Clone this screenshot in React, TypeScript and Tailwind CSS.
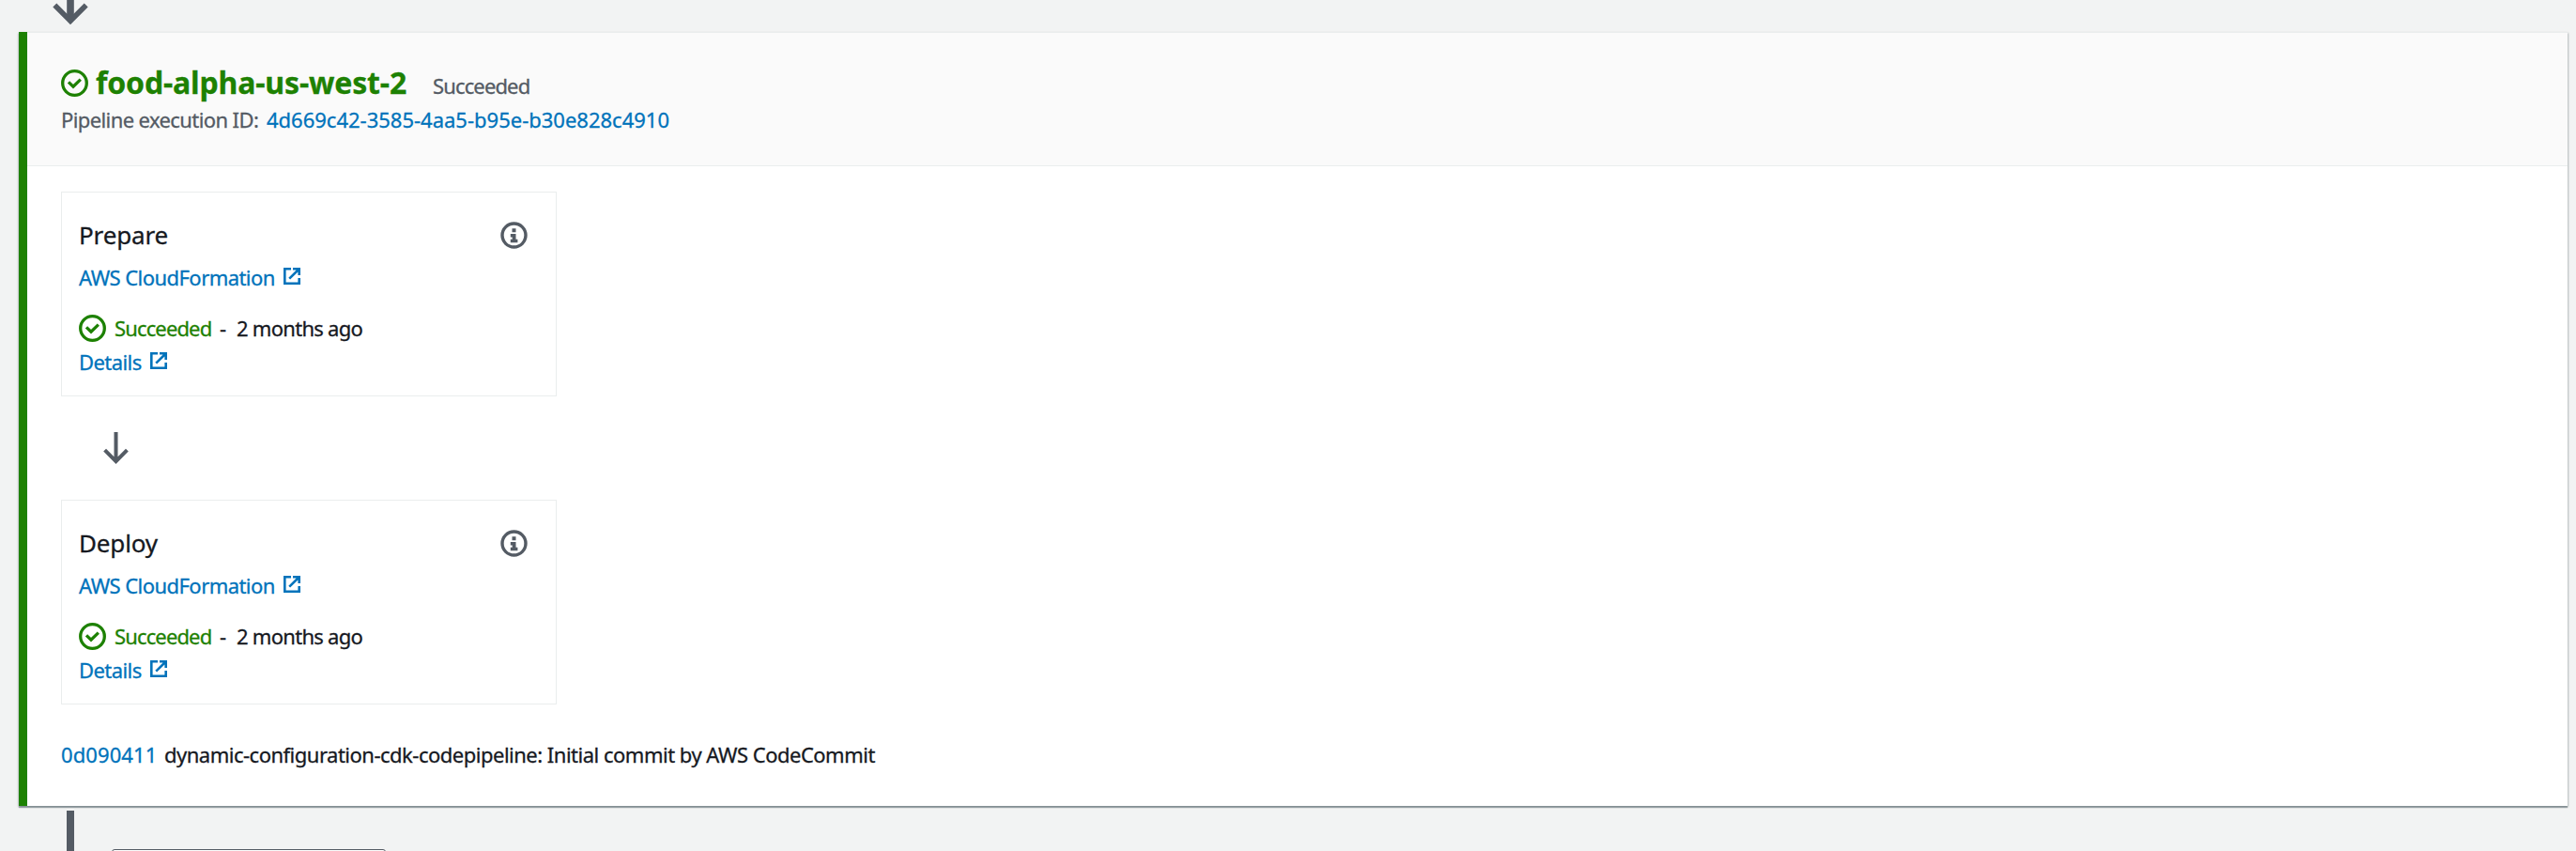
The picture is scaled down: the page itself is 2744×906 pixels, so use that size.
import React from "react";

function CheckIcon() {
  return (
    <svg width="29" height="29" viewBox="0 0 29 29" fill="none" stroke="#1d8102" strokeWidth="3.3" className="block shrink-0">
      <circle cx="14.5" cy="14.5" r="12.8" />
      <path d="M8 13.4l5 4.8 7.8-7.6" />
    </svg>
  );
}

function InfoIcon() {
  return (
    <svg width="29" height="29" viewBox="0 0 29 29" fill="none" className="block shrink-0">
      <circle cx="14.5" cy="14.5" r="12.5" stroke="#545b64" strokeWidth="3.4" />
      <path fill="#545b64" d="M12.5 7.2h4v4h-4zM10.8 13h5.7v5.7h1.9v3.6h-7.6v-3.6h1.9v-2.2h-1.9z" />
    </svg>
  );
}

function ExternalIcon() {
  return (
    <svg width="18" height="18" viewBox="0 0 18 18" fill="none" stroke="#0073bb" strokeWidth="2.6" className="block shrink-0">
      <path d="M8 1.3H1.3v15.4h15.4V11" />
      <path d="M10 1.3h6.7V8M16.5 1.5L6.2 11.6" />
    </svg>
  );
}

function ActionCard({ name }: { name: string }) {
  return (
    <div className="h-[218px] w-[528px] border border-[#eaeded] pr-[30px] pl-[18px]">
      <div className="flex h-[65px] items-end justify-between">
        <div className="h-[35px] text-[26px] leading-[30px] tracking-[-0.15px]">{name}</div>
        <div className="pb-[5px]"><InfoIcon /></div>
      </div>
      <a className="mt-[10px] flex h-[30px] items-start text-[#0073bb]">
        <span className="w-[218px] tracking-[-0.55px]">AWS CloudFormation</span>
        <span className="pt-[5px]"><ExternalIcon /></span>
      </a>
      <div className="mt-[24px] flex h-[30px]">
        <span className="w-[38px] pt-px"><CheckIcon /></span>
        <span className="w-[112px] tracking-[-0.86px] text-[#1d8102]">Succeeded</span>
        <span className="w-[18px]">-</span>
        <span className="tracking-[-0.72px]">2 months ago</span>
      </div>
      <a className="mt-[6px] flex h-[30px] text-[#0073bb]">
        <span className="w-[76px] tracking-[-0.57px]">Details</span>
        <span className="pt-[5px]"><ExternalIcon /></span>
      </a>
    </div>
  );
}

export default function App() {
  return (
    <div className="flex h-[906px] w-[2744px] flex-col overflow-hidden bg-[#f2f3f3] font-['Noto_Sans',sans-serif] text-[22px] leading-[30px] whitespace-nowrap text-[#16191f] [-webkit-text-stroke:0.3px]">
      <div className="h-[34px] shrink-0 pl-[56px]">
        <svg width="38" height="27" viewBox="0 0 38 27" fill="none" stroke="#545b64" className="block">
          <path d="M19 0v22" strokeWidth="7.6" />
          <path d="M2.3 5.5L19 22.2 35.7 5.5" strokeWidth="5.6" />
        </svg>
      </div>
      <section className="ml-[20px] h-[824px] w-[2715px] shrink-0 border-l-[9px] border-[#1d8102] bg-white shadow-[0_2px_1px_0_rgba(0,28,36,0.3),1px_1px_2px_0_rgba(0,28,36,0.2),-1px_1px_2px_0_rgba(0,28,36,0.15)]">
        <header className="h-[143px] border-y border-[#eaeded] bg-[#fafafa] pt-[37px] pl-[36px]">
          <div className="flex h-[40px]">
            <span className="w-[37px] pt-[2px]"><CheckIcon /></span>
            <h1 className="w-[359px] text-[32px] leading-[32px] font-bold tracking-[-0.15px] text-[#1d8102]">food-alpha-us-west-2</h1>
            <span className="pt-[4px] tracking-[-0.86px] text-[#545b64]">Succeeded</span>
          </div>
          <div className="flex">
            <span className="w-[219px] tracking-[-0.6px] text-[#545b64]">Pipeline execution ID:</span>
            <a className="text-[#0073bb]">4d669c42-3585-4aa5-b95e-b30e828c4910</a>
          </div>
        </header>
        <div className="pt-[27px] pl-[36px]">
          <ActionCard name="Prepare" />
          <div className="h-[110px] pt-[38px] pl-[45px]">
            <svg width="27" height="35" viewBox="0 0 27 35" fill="none" stroke="#545b64" strokeWidth="4" className="block">
              <path d="M13.5 0v31M1.6 19.2l11.9 11.9 11.9-11.9" />
            </svg>
          </div>
          <ActionCard name="Deploy" />
          <div className="mt-[38px] flex">
            <a className="w-[110px] tracking-[0.1px] text-[#0073bb]">0d090411</a>
            <span className="tracking-[-0.5px]">dynamic-configuration-cdk-codepipeline: Initial commit by AWS CodeCommit</span>
          </div>
        </div>
      </section>
      <div className="flex h-[48px] shrink-0 pt-[5px] pl-[71px]">
        <div className="h-[43px] w-[8px] bg-[#545b64]" />
        <div className="mt-[41px] ml-[40px] h-[40px] w-[292px] rounded-[3px] border border-[#545b64] bg-white" />
      </div>
    </div>
  );
}
